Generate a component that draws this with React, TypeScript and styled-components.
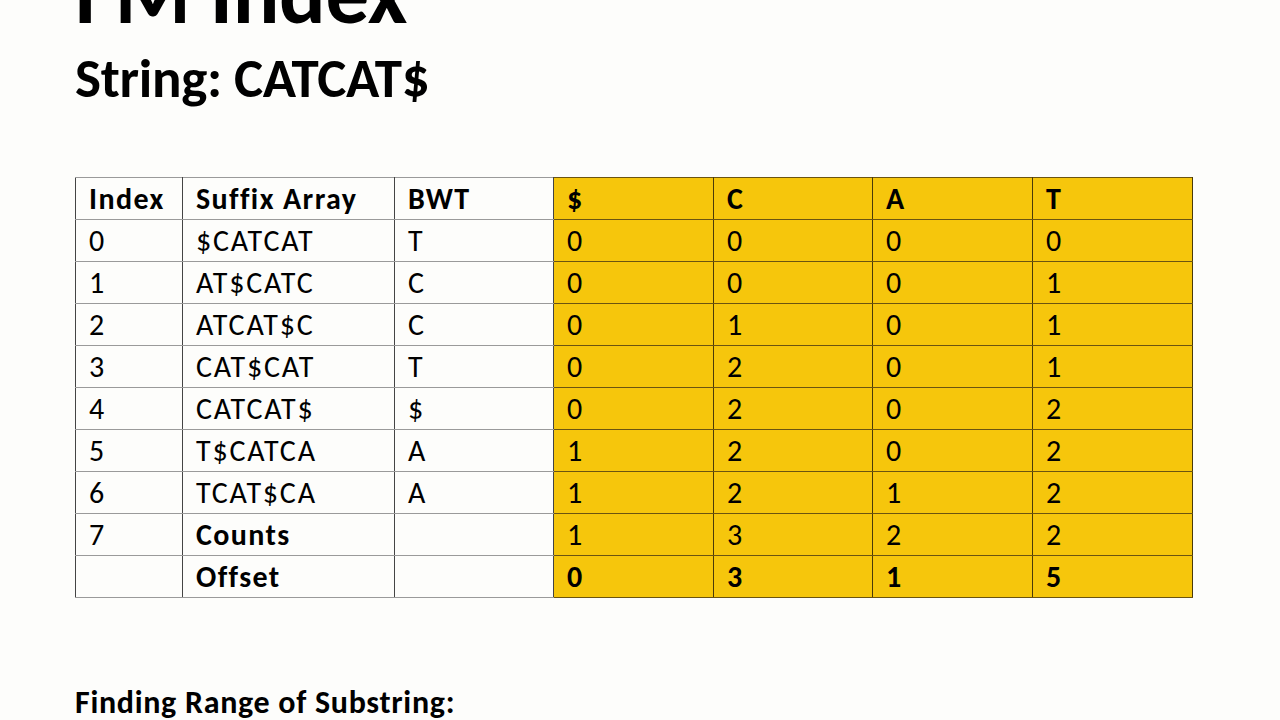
import React from "react";
import styled, { createGlobalStyle } from "styled-components";

const Global = createGlobalStyle`
  html, body { margin: 0; padding: 0; background: #fdfdfb; }
  body { width: 1280px; height: 720px; overflow: hidden; font-family: Carlito, Lato, "Open Sans", sans-serif; color: #000; }
`;

const Slide = styled.div`
  width: 1280px;
  height: 720px;
  overflow: hidden;
  box-sizing: border-box;
  padding-left: 75px;
  display: flex;
  flex-direction: column;
`;

const Title = styled.h1`
  margin: -50px 0 0 0;
  font-size: 87px;
  line-height: 87px;
  font-weight: 700;
  letter-spacing: -0.3px;
  height: 40px;
  flex-shrink: 0;
`;

const Subtitle = styled.h2`
  margin: 61px 0 0 0;
  font-size: 55px;
  line-height: 56px;
  font-weight: 700;
  letter-spacing: -0.3px;
  flex-shrink: 0;
`;

const Table = styled.table`
  margin-top: 70px;
  border-collapse: collapse;
  table-layout: fixed;
  width: 1117px;
  flex-shrink: 0;
`;

const Cell = styled.td<{ $yellow?: boolean; $bold?: boolean }>`
  height: 41px;
  padding: 0 0 0 13px;
  box-sizing: border-box;
  border: 1px solid ${(p) => (p.$yellow ? "#4a3a08" : "#444")};
  border-top-color: ${(p) => (p.$yellow ? "#6b5410" : "#9a9a9a")};
  border-bottom-color: ${(p) => (p.$yellow ? "#6b5410" : "#9a9a9a")};
  background: ${(p) => (p.$yellow ? "#f6c60c" : "transparent")};
  font-size: 30px;
  line-height: 41px;
  letter-spacing: ${(p) => (p.$bold ? "1.4px" : "1.8px")};
  font-weight: ${(p) => (p.$bold ? 700 : 400)};
  white-space: nowrap;
  vertical-align: middle;
`;

const Footer = styled.div`
  margin-top: 88px;
  font-size: 32px;
  line-height: 34px;
  font-weight: 700;
  letter-spacing: 0.7px;
  flex-shrink: 0;
`;

const widths = [107, 212, 159, 160, 159, 160, 160];

type Row = { cells: string[]; boldLeft?: boolean; boldAll?: boolean };

const rows: Row[] = [
  { cells: ["Index", "Suffix Array", "BWT", "$", "C", "A", "T"], boldAll: true },
  { cells: ["0", "$CATCAT", "T", "0", "0", "0", "0"] },
  { cells: ["1", "AT$CATC", "C", "0", "0", "0", "1"] },
  { cells: ["2", "ATCAT$C", "C", "0", "1", "0", "1"] },
  { cells: ["3", "CAT$CAT", "T", "0", "2", "0", "1"] },
  { cells: ["4", "CATCAT$", "$", "0", "2", "0", "2"] },
  { cells: ["5", "T$CATCA", "A", "1", "2", "0", "2"] },
  { cells: ["6", "TCAT$CA", "A", "1", "2", "1", "2"] },
  { cells: ["7", "Counts", "", "1", "3", "2", "2"], boldLeft: true },
  { cells: ["", "Offset", "", "0", "3", "1", "5"], boldAll: true },
];

export default function App() {
  return (
    <>
      <Global />
      <Slide>
        <Title>FM Index</Title>
        <Subtitle>String: CATCAT$</Subtitle>
        <Table>
          <colgroup>
            {widths.map((w, i) => (
              <col key={i} style={{ width: w }} />
            ))}
          </colgroup>
          <tbody>
            {rows.map((r, ri) => (
              <tr key={ri}>
                {r.cells.map((c, ci) => (
                  <Cell
                    key={ci}
                    $yellow={ci >= 3}
                    $bold={r.boldAll || (r.boldLeft && ci === 1)}
                  >
                    {c}
                  </Cell>
                ))}
              </tr>
            ))}
          </tbody>
        </Table>
        <Footer>Finding Range of Substring:</Footer>
      </Slide>
    </>
  );
}
